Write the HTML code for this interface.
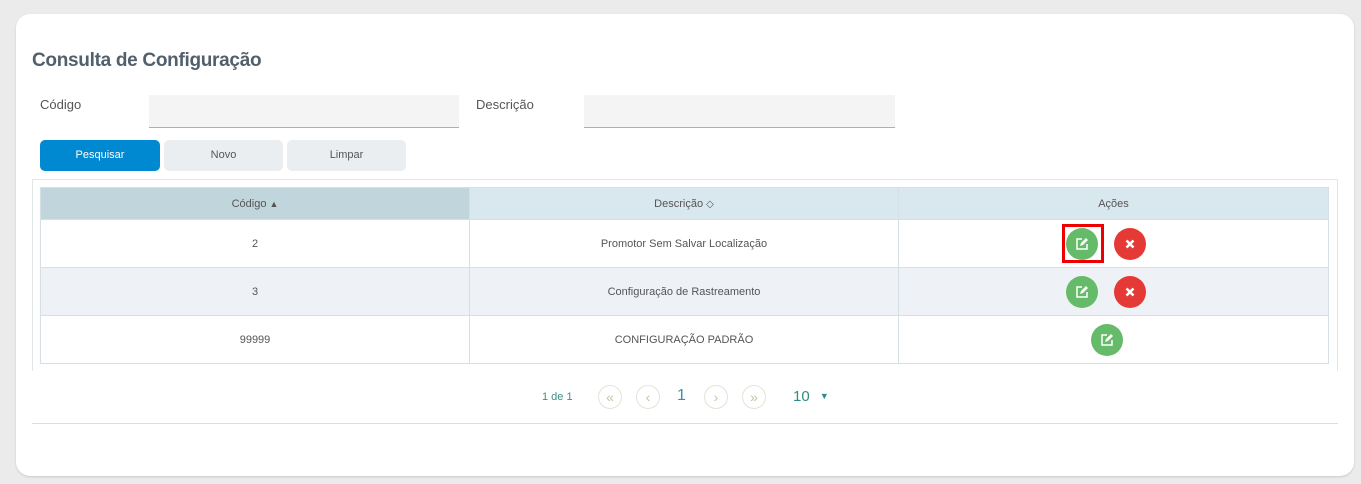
<!DOCTYPE html>
<html><head><style>
*{box-sizing:border-box;margin:0;padding:0}
body{width:1361px;height:484px;background:#ebebeb;font-family:"Liberation Sans",sans-serif;position:relative;overflow:hidden}
.card{position:absolute;left:16px;top:14px;width:1338px;height:462px;background:#fff;border-radius:14px;box-shadow:0 1px 2px rgba(0,0,0,.15)}
.abs{position:absolute}
.title{left:32px;top:50px;font-size:19px;color:#52606d;font-weight:bold;letter-spacing:-0.3px}
.lbl{font-size:13px;color:#555;top:97px}
.inp{top:95px;height:33px;background:#f4f4f4;border-bottom:1px solid #a8b0b8}
.btn{top:140px;height:31px;border-radius:5px;font-size:11px;text-align:center;line-height:31px;color:#555;background:#ebeef1}
.tbox{left:32px;top:179px;width:1306px;height:192px;border:1px solid #e3e6e8;border-bottom:none}
table{position:absolute;left:40px;top:187px;width:1289px;border-collapse:collapse;font-size:11px;color:#555}
td,th{border:1px solid #d5dfe4;text-align:center;font-weight:normal}
th{height:32px;background:#d9e7ee}
th.s{background:#c0d5dc}
td{height:48px}
tr.alt td{background:#eef2f6}
.c{display:inline-block;width:32px;height:32px;border-radius:50%;vertical-align:middle;position:relative;margin:0 8px}
.g{background:#66bb6a}.r{background:#e53935}
.c svg{position:absolute;left:9px;top:9px}
.pg{font-size:11px;color:#3c8f86}
.ci{top:385px;width:24px;height:24px;border:1px solid #dfe6d6;border-radius:50%;color:#b8c9a6;text-align:center;line-height:22px;font-size:14px}
</style></head><body>
<div class="card"></div>
<div class="abs title">Consulta de Configuração</div>
<div class="abs lbl" style="left:40px">Código</div>
<div class="abs inp" style="left:149px;width:310px"></div>
<div class="abs lbl" style="left:476px">Descrição</div>
<div class="abs inp" style="left:584px;width:311px"></div>
<div class="abs btn" style="left:40px;width:120px;background:#0088d1;color:#fff">Pesquisar</div>
<div class="abs btn" style="left:164px;width:119px">Novo</div>
<div class="abs btn" style="left:287px;width:119px">Limpar</div>
<div class="abs tbox"></div>
<table>
<tr><th class="s" style="width:429px">Código <span style="font-size:9px">&#9650;</span></th><th style="width:429px">Descrição <span style="font-size:10px">&#9671;</span></th><th>Ações</th></tr>
<tr><td>2</td><td>Promotor Sem Salvar Localização</td><td style="padding-right:16px"><span class="c g"><svg width="14" height="14" viewBox="0 0 14 14"><path d="M7 2H2v10h10V7" fill="none" stroke="#fff" stroke-width="1.5"/><path d="M5 9l1-3 5-5 2 2-5 5z" fill="#fff"/></svg></span><span class="c r"><svg width="14" height="14" viewBox="0 0 14 14"><path d="M3.5 3.5l7 7M10.5 3.5l-7 7" stroke="#fff" stroke-width="2.6"/></svg></span></td></tr>
<tr class="alt"><td>3</td><td>Configuração de Rastreamento</td><td style="padding-right:16px"><span class="c g"><svg width="14" height="14" viewBox="0 0 14 14"><path d="M7 2H2v10h10V7" fill="none" stroke="#fff" stroke-width="1.5"/><path d="M5 9l1-3 5-5 2 2-5 5z" fill="#fff"/></svg></span><span class="c r"><svg width="14" height="14" viewBox="0 0 14 14"><path d="M3.5 3.5l7 7M10.5 3.5l-7 7" stroke="#fff" stroke-width="2.6"/></svg></span></td></tr>
<tr><td>99999</td><td>CONFIGURAÇÃO PADRÃO</td><td style="padding-right:14px"><span class="c g"><svg width="14" height="14" viewBox="0 0 14 14"><path d="M7 2H2v10h10V7" fill="none" stroke="#fff" stroke-width="1.5"/><path d="M5 9l1-3 5-5 2 2-5 5z" fill="#fff"/></svg></span></td></tr>
</table>
<div class="abs" style="left:1062px;top:224px;width:42px;height:39px;border:3px solid #e00"></div>
<div class="abs pg" style="left:542px;top:391px">1 de 1</div>
<div class="abs ci" style="left:598px">&#171;</div>
<div class="abs ci" style="left:636px">&#8249;</div>
<div class="abs" style="left:677px;top:387px;font-size:16px;color:#3a8fb5">1</div>
<div class="abs ci" style="left:704px">&#8250;</div>
<div class="abs ci" style="left:742px">&#187;</div>
<div class="abs" style="left:793px;top:388px;font-size:15px;color:#2f8c82">10 <span style="font-size:9px;margin-left:6px;vertical-align:2px">&#9660;</span></div>
<div class="abs" style="left:32px;top:423px;width:1306px;height:1px;background:#ddd"></div>
</body></html>
